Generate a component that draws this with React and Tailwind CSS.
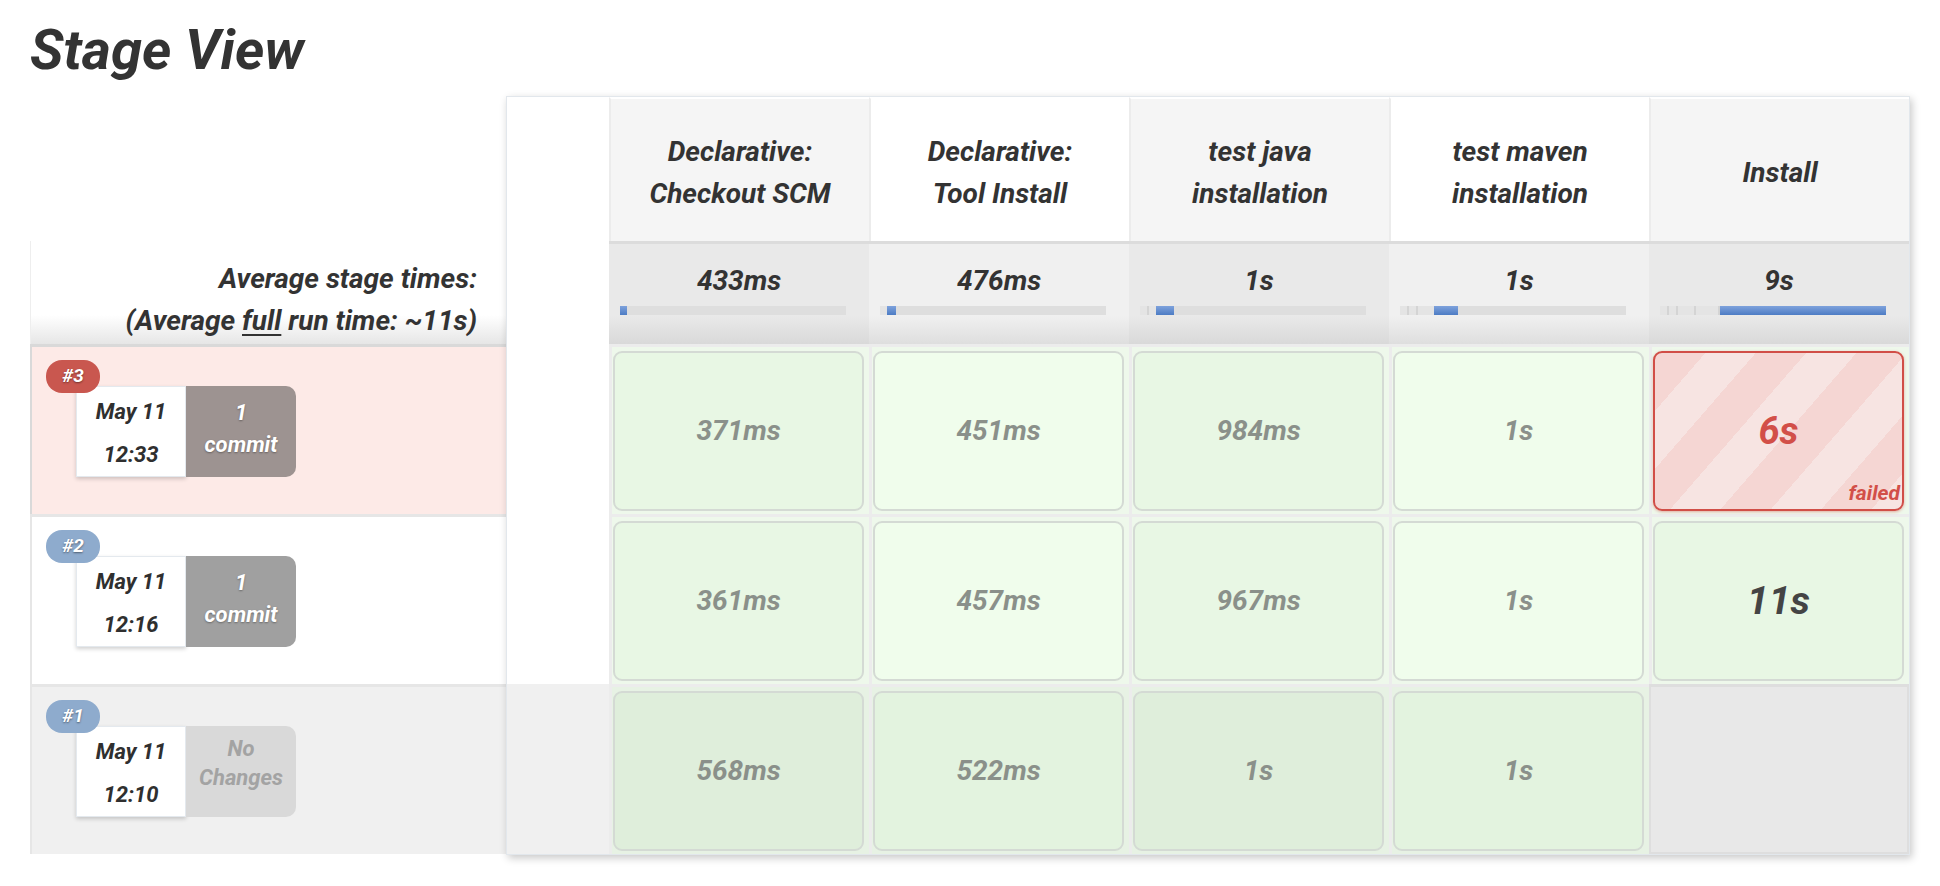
const stages = [
  { name: ['Declarative:', 'Checkout SCM'], avg: '433ms', start: 0, width: 7 },
  { name: ['Declarative:', 'Tool Install'], avg: '476ms', start: 7, width: 9 },
  { name: ['test java', 'installation'], avg: '1s', start: 16, width: 18 },
  { name: ['test maven', 'installation'], avg: '1s', start: 34, width: 24 },
  { name: ['Install'], avg: '9s', start: 59, width: 167 },
];

const ticks = [7, 16, 34, 58];

const runs = [
  {
    id: '#3',
    badge: 'bg-[#c9574f]',
    row: 'bg-[#fdeae7] border-[#d9d9d9]',
    date: 'May 11',
    time: '12:33',
    changes: ['1', 'commit'],
    changeBox: 'bg-[#9d9391] text-white pt-[11px] leading-[32px] [text-shadow:0_1px_2px_rgba(0,0,0,0.35)]',
    first: 'bg-white',
    cells: ['371ms', '451ms', '984ms', '1s', { failed: '6s' }],
  },
  {
    id: '#2',
    badge: 'bg-[#8eabcd]',
    row: 'bg-white border-[#e6e6e6]',
    date: 'May 11',
    time: '12:16',
    changes: ['1', 'commit'],
    changeBox: 'bg-[#a0a0a0] text-white pt-[11px] leading-[32px] [text-shadow:0_1px_2px_rgba(0,0,0,0.35)]',
    first: 'bg-white',
    cells: ['361ms', '457ms', '967ms', '1s', { big: '11s' }],
  },
  {
    id: '#1',
    badge: 'bg-[#8eabcd]',
    row: 'bg-[#f0f0f0] border-[#e6e6e6]',
    date: 'May 11',
    time: '12:10',
    changes: ['No', 'Changes'],
    changeBox: 'bg-[#d9d9d9] text-[#a3a3a3] pt-[8px] leading-[29px]',
    first: 'bg-[#f0f0f0]',
    old: true,
    cells: ['568ms', '522ms', '1s', '1s', null],
  },
];

function RunLabel({ run }) {
  return (
    <div className={`h-[170px] border-t-[3px] border-l-2 ${run.row}`}>
      <div className="relative ml-[44px] mt-[39px] flex w-max">
        <span
          className={`absolute -left-[30px] -top-[26px] z-10 flex h-[33px] w-[54px] items-center justify-center rounded-[16px] text-[19px] text-white [text-shadow:0_1px_2px_rgba(0,0,0,0.45)] ${run.badge}`}
        >
          {run.id}
        </span>
        <div className="flex h-[91px] w-[110px] flex-col items-center border border-[#e4e9ee] bg-white pt-[3px] text-[22px] leading-[43px] text-[#2f2f2f] shadow-[0_2px_4px_rgba(0,0,0,0.18)]">
          <span>{run.date}</span>
          <span>{run.time}</span>
        </div>
        <div className={`flex h-[91px] w-[110px] flex-col items-center rounded-r-[10px] text-[22px] ${run.changeBox}`}>
          <span>{run.changes[0]}</span>
          <span>{run.changes[1]}</span>
        </div>
      </div>
    </div>
  );
}

function StageCell({ value, index, old }) {
  const odd = index % 2 === 1;
  if (value === null) {
    return <div className="border-2 border-t-[3px] border-[#dedede] bg-[#e8e8e8]" />;
  }
  const tdBg = old ? 'bg-[#e7f2e4]' : 'bg-[#eef8eb]';
  if (value.failed) {
    return (
      <div className={`border-l-[3px] border-t-[3px] border-[#ececec] pb-[3px] pl-[1px] pr-[5px] pt-[4px] ${tdBg}`}>
        <div className="relative flex h-full items-center justify-center rounded-[9px] border-2 border-[#d14e47] bg-[repeating-linear-gradient(131deg,#f5d6d3_0px,#f5d6d3_38px,#f7e4e2_38px,#f7e4e2_76px)] text-[38px] text-[#d24f48] shadow-[0_1px_3px_rgba(210,78,71,0.45)]">
          {value.failed}
          <span className="absolute bottom-[4px] right-[2px] text-[21px] leading-[24px]">failed</span>
        </div>
      </div>
    );
  }
  let cellBg = odd ? 'bg-[#f0fdec]' : 'bg-[#e8f7e4]';
  if (old) cellBg = odd ? 'bg-[#e3f3df]' : 'bg-[#dfeedb]';
  const big = typeof value === 'object';
  return (
    <div className={`border-l-[3px] border-t-[3px] border-[#ececec] pb-[3px] pl-[1px] pr-[5px] pt-[4px] ${tdBg}`}>
      <div
        className={`flex h-full items-center justify-center rounded-[9px] border-2 border-[#d4dad4] ${cellBg} ${
          big ? 'text-[39px] text-[#444]' : 'text-[28px] text-[#8a908a]'
        }`}
      >
        {big ? value.big : value}
      </div>
    </div>
  );
}

export default function App() {
  return (
    <div className="min-h-screen bg-white pl-[30px] pt-[22px] font-['Roboto',sans-serif] font-bold italic text-[#333]">
      <h1 className="text-[56px] leading-[56px]">Stage View</h1>

      <div className="mt-[18px] flex">
        {/* left: labels + builds */}
        <div className="w-[476px]">
          <div className="h-[145px]" />
          <div className="h-[103px] border-l border-[#eeeeee] bg-[linear-gradient(to_bottom,#ffffff_72%,#e6e6e6)] pr-[29px] pt-[17px] text-right text-[28px] leading-[42px]">
            <div>Average stage times:</div>
            <div>
              (Average <span className="underline underline-offset-4">full</span> run time: ~11s)
            </div>
          </div>
          {runs.map((run) => (
            <RunLabel key={run.id} run={run} />
          ))}
        </div>

        {/* table */}
        <div className="grid grid-cols-[102px_repeat(5,260px)] grid-rows-[144px_103px_repeat(3,170px)] border border-[#e2e7ec] bg-white shadow-[2px_3px_8px_rgba(0,0,0,0.22)]">
          <div className="row-span-2 bg-white" />
          {stages.map((s, i) => (
            <div
              key={s.name.join()}
              className={`flex flex-col items-center justify-center border-l-2 border-t-2 border-l-[#ececec] border-t-white pt-[5px] text-center text-[28px] leading-[42px] ${
                i % 2 === 0 ? 'bg-[#f5f5f5]' : 'bg-white'
              }`}
            >
              {s.name.map((line) => (
                <span key={line}>{line}</span>
              ))}
            </div>
          ))}
          {stages.map((s, i) => (
            <div
              key={s.avg + i}
              className={`border-t-[3px] border-[#dcdcdc] pt-[21px] ${
                i % 2 === 0
                  ? 'bg-[linear-gradient(to_bottom,#e9e9e9_72%,#d9d9d9)]'
                  : 'bg-[linear-gradient(to_bottom,#f0f0f0_72%,#dedede)]'
              }`}
            >
              <div className="text-center text-[28px] leading-[32px]">{s.avg}</div>
              <div className="relative ml-[11px] mt-[9px] flex h-[9px] w-[226px] bg-[#dedede]">
                <div className="h-full bg-[#e4e4e4]" style={{ width: s.start }} />
                {ticks
                  .filter((t) => t < s.start)
                  .map((t) => (
                    <span key={t} className="absolute top-0 h-full w-[2px] bg-[#d4d4d4]" style={{ left: t }} />
                  ))}
                <div
                  className="h-full bg-[linear-gradient(to_bottom,#7ea2dc,#4d7cc4)]"
                  style={{ width: s.width }}
                />
              </div>
            </div>
          ))}
          {runs.map((run) => [
            <div key={run.id + 'f'} className={run.first} />,
            ...run.cells.map((c, i) => (
              <StageCell key={run.id + i} value={c} index={i} old={run.old} />
            )),
          ])}
        </div>
      </div>
    </div>
  );
}
